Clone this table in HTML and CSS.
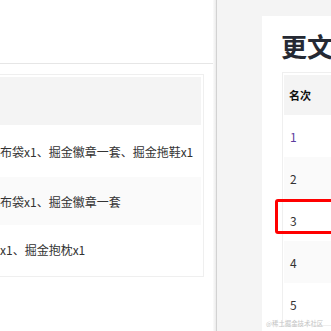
FILE: index.html
```html
<!DOCTYPE html>
<html lang="zh">
<head>
<meta charset="utf-8">
<link rel="stylesheet" href="styles.css">
</head>
<body>
<div class="left">
  <div class="topbar"></div>
  <div class="ltable">
    <div class="lrow lhead"></div>
    <div class="lrow r1">掘金帆布袋x1、掘金徽章一套、掘金拖鞋x1</div>
    <div class="lrow r2 stripe">掘金帆布袋x1、掘金徽章一套</div>
    <div class="lrow r3">掘金杯x1、掘金抱枕x1</div>
  </div>
</div>
<div class="divider"></div>
<div class="right">
  <div class="card">
    <h1 class="title">更文活动排行榜</h1>
    <div class="rtable">
      <div class="rrow rhead">名次</div>
      <div class="rrow link">1</div>
      <div class="rrow stripe">2</div>
      <div class="rrow">3</div>
      <div class="rrow stripe">4</div>
      <div class="rrow">5</div>
      <div class="mark"></div>
    </div>
  </div>
  <div class="watermark">@稀土掘金技术社区</div>
</div>
</body>
</html>
```

FILE: styles.css
```css
html, body {
  margin: 0;
  padding: 0;
}
body {
  width: 331px;
  height: 331px;
  overflow: hidden;
  display: flex;
  font-family: "Noto Sans CJK SC", "Noto Sans", sans-serif;
  background: #f4f4f4;
}
.left {
  width: 213px;
  flex: none;
  background: #fff;
  overflow: hidden;
}
.topbar {
  height: 63px;
  border-bottom: 1px solid #e6e6e6;
}
.ltable {
  margin-top: 10px;
  margin-left: -39px;
  width: 237px;
  border: 1px solid #efefef;
  padding: 2px;
}
.lrow {
  display: flex;
  align-items: center;
  font-size: 12px;
  color: #333;
  white-space: nowrap;
}
.lhead { height: 48px; background: #f4f4f4; }
.r1 { height: 52px; }
.r2 { height: 48px; }
.r3 { height: 49px; }
.lrow.stripe { background: #fafafa; }
.divider {
  width: 4px;
  flex: none;
  background: linear-gradient(to right, #fbfbfb, #ececec 70%, #d2d2d2 75%, #d2d2d2);
}
.right {
  flex: 1;
  position: relative;
  padding: 16px 0 0 45px;
  overflow: hidden;
}
.card {
  background: #fff;
  width: 300px;
  height: 330px;
  padding: 12px 0 0 20px;
  box-sizing: border-box;
}
.title {
  margin: 0 0 8px -1px;
  font-size: 26px;
  line-height: 36px;
  font-weight: 700;
  color: #252933;
  white-space: nowrap;
}
.rtable {
  position: relative;
  border: 1px solid #efefef;
  padding: 2px 0 0 1px;
}
.rrow {
  height: 42px;
  display: flex;
  align-items: center;
  padding-left: 6px;
  font-size: 12px;
  color: #333;
}
.rrow.rhead {
  height: 40px;
  background: #f4f4f4;
  font-weight: 700;
  font-size: 11px;
  color: #111;
  padding-left: 5px;
}
.rrow.stripe { background: #fafafa; }
.rrow.link { color: #5c3a9e; }
.mark {
  position: absolute;
  left: -8px;
  top: 126px;
  width: 200px;
  height: 35px;
  border: 3px solid #f00;
  border-radius: 3px;
  box-sizing: border-box;
}
.watermark {
  position: absolute;
  left: 49px;
  top: 318px;
  font-size: 6.4px;
  line-height: 12px;
  color: #c4c4c4;
  white-space: nowrap;
}
```
